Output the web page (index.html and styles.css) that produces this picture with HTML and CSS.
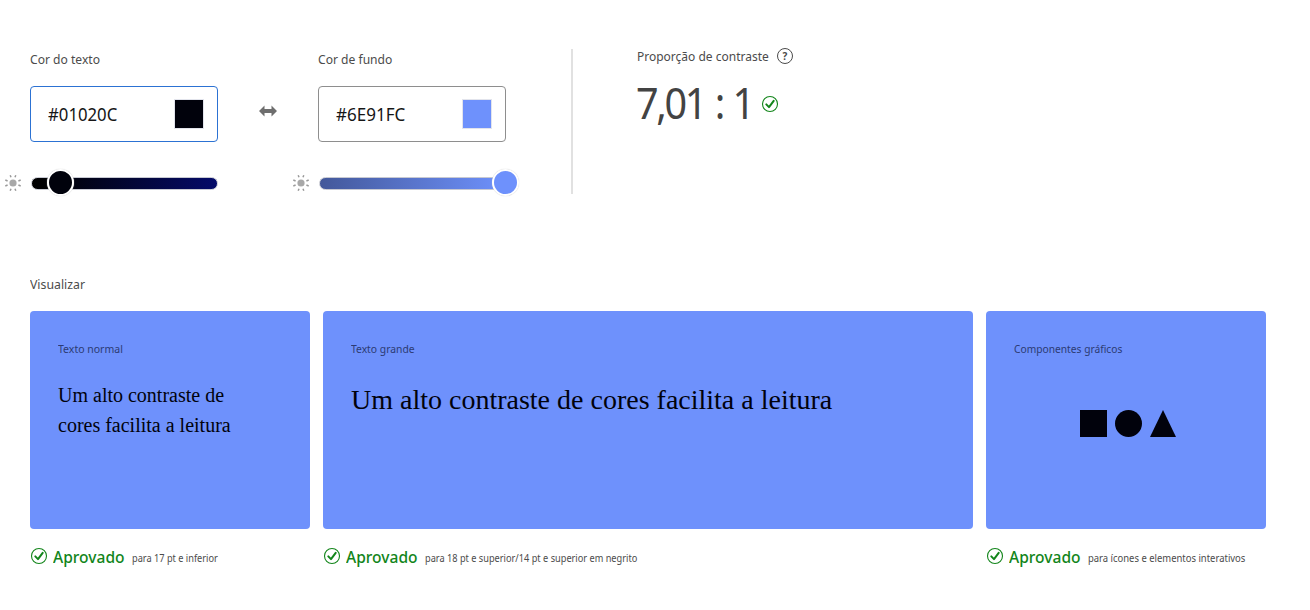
FILE: index.html
```html
<!DOCTYPE html>
<html lang="pt-BR">
<head>
<meta charset="utf-8">
<title>Contraste</title>
<link rel="stylesheet" href="styles.css">
</head>
<body>
<svg class="defs" width="0" height="0">
  <symbol id="sun" viewBox="0 0 18 18">
    <circle cx="9" cy="9" r="3.6" fill="#a8a8a8"/>
    <path d="M7 3.300 6.200 1.200M11 3.300l.8-2.100M7 14.700l-.8 2.100M11 14.700l.8 2.100M3.600 7 1.300 6M3.600 11l-2.300 1M14.400 7l2.300-1M14.400 11l2.300 1" stroke="#9a9a9a" stroke-width="1.500" fill="none"/>
  </symbol>
  <symbol id="check" viewBox="0 0 18 18">
    <circle cx="9" cy="9" r="7.500" fill="none" stroke="#12851a" stroke-width="1.100"/>
    <path d="M5.300 9.400 8 12.100 12.700 5.900" fill="none" stroke="#12851a" stroke-width="2" stroke-linecap="round" stroke-linejoin="round"/>
  </symbol>
</svg>
<main class="page">
  <section class="controls">
    <div class="field">
      <span class="label label-text">Cor do texto</span>
      <div class="input active"><span class="hex hex-text">#01020C</span><span class="swatch dark"></span></div>
      <div class="slider"><svg class="sun"><use href="#sun"/></svg><div class="track track-dark"><span class="thumb dark thumb-low"></span></div></div>
    </div>
    <svg class="swap" viewBox="0 0 18 12"><path d="M0 6 5.500.6V4h7V.6L18 6l-5.500 5.400V8h-7v3.400z" fill="#6e6e6e"/></svg>
    <div class="field">
      <span class="label label-bg">Cor de fundo</span>
      <div class="input"><span class="hex hex-bg">#6E91FC</span><span class="swatch blue"></span></div>
      <div class="slider"><svg class="sun"><use href="#sun"/></svg><div class="track track-blue"><span class="thumb blue thumb-high"></span></div></div>
    </div>
    <div class="divider"></div>
    <div class="ratio">
      <div class="ratio-head"><span class="label label-ratio">Proporção de contraste</span><span class="help">?</span></div>
      <div class="ratio-row"><span class="value">7,01 : 1</span><svg class="check"><use href="#check"/></svg></div>
    </div>
  </section>
  <h2 class="label label-preview">Visualizar</h2>
  <section class="cards">
    <article class="card"><div class="panel"><span class="kind kind-normal">Texto normal</span><p class="sample">Um alto contraste de<br>cores facilita a leitura</p></div>
      <div class="status"><svg class="check"><use href="#check"/></svg><strong>Aprovado</strong><small class="note-normal">para 17 pt e inferior</small></div></article>
    <article class="card"><div class="panel"><span class="kind kind-large">Texto grande</span><p class="sample large">Um alto contraste de cores facilita a leitura</p></div>
      <div class="status"><svg class="check"><use href="#check"/></svg><strong>Aprovado</strong><small class="note-large">para 18 pt e superior/14 pt e superior em negrito</small></div></article>
    <article class="card"><div class="panel"><span class="kind kind-graphic">Componentes gráficos</span>
      <svg class="shapes" viewBox="0 0 96 27"><path d="M0 0h27v27H0z"/><circle cx="48.500" cy="13.500" r="13.500"/><path d="m83 0 13 27H70z"/></svg></div>
      <div class="status"><svg class="check"><use href="#check"/></svg><strong>Aprovado</strong><small class="note-graphic">para ícones e elementos interativos</small></div></article>
  </section>
</main>
</body>
</html>
```
FILE: styles.css
```css
* { box-sizing: border-box; }
body { margin: 0; background: #fff; font-family: "Noto Sans", sans-serif; color: #4b4b4b; }
.defs { position: absolute; }
.page { width: 1310px; height: 610px; padding: 49px 44px 0 30px; overflow: hidden; }
.controls { display: flex; height: 145px; }
.field { width: 188px; display: flex; flex-direction: column; }
.field > * { flex-shrink: 0; }

/* Slightly condensed interface lettering */
.label, .hex, .value, .kind, .status strong, .status small { transform: scaleX(.93); transform-origin: left center; white-space: nowrap; }

.label { display: block; margin: 0; font-size: 13px; line-height: 20px; font-weight: 400; }
.input { display: flex; align-items: center; justify-content: space-between; height: 56px; margin-top: 17px; padding: 0 13px 0 17px; border: 1px solid #8e8e8e; border-radius: 4px; }
.input.active { border-color: #2c72d3; }
.hex { font-size: 18px; color: #161616; }
.hex-bg { transform: scaleX(.945); }
.swatch { width: 30px; height: 30px; border: 1px solid #e2e4ec; }
.dark { background: #01020c; }
.blue { background: #6e91fc; }
.slider { display: flex; align-items: center; height: 26px; margin: 28px 0 0 -26px; gap: 9px; }
.sun { width: 18px; height: 18px; flex: none; }
.track { position: relative; width: 187px; height: 13px; border: 1px solid #c7c9d2; border-radius: 7px; flex: none; }
.track-dark { background: linear-gradient(90deg, #000, #01020c 18%, #050b6a); }
.track-blue { background: linear-gradient(90deg, #43589a, #6e91fc); }
.thumb { position: absolute; top: -9px; width: 27px; height: 27px; border: 2px solid #fff; border-radius: 50%; box-shadow: 0 0 1px #c4c4c4; }
.thumb-low { left: 15px; }
.thumb-high { left: 172px; }
.swap { width: 18px; height: 12px; margin: 56px 41px 0; }
.divider { width: 2px; margin: 0 64px 0 65px; background: #e1e1e1; }
.ratio-head { display: flex; align-items: center; gap: 8px; height: 16px; margin-top: -1px; }
.label-ratio { width: 132px; transform: scaleX(.923); }
.help { width: 16px; height: 16px; border: 1px solid #4b4b4b; border-radius: 50%; font-size: 10px; line-height: 14px; font-weight: 700; text-align: center; }
.ratio-row { display: flex; align-items: center; height: 60px; margin-top: 10px; gap: 10px; }
.value { width: 114px; font-size: 43px; line-height: 60px; color: #434343; letter-spacing: -2.600px; word-spacing: 2px; transform: translate(-1px, -1px) scaleX(.92); }
.check { width: 18px; height: 18px; flex: none; }
.label-preview { margin-top: 80px; transform: scaleX(.945); }
.cards { display: grid; grid-template-columns: 280px 650px 280px; gap: 13px; margin-top: 17px; }
.panel { display: flex; flex-direction: column; height: 218px; padding: 29px 28px; border-radius: 4px; background: #6e91fc; }
.kind { font-size: 11px; line-height: 18px; color: #2c3b73; }
.kind-normal { transform: scaleX(.955); }
.kind-large { transform: scaleX(.94); }
.sample { margin: 22px 0 0; font-family: "Liberation Serif", serif; font-size: 20px; line-height: 30px; color: #01020c; white-space: nowrap; }
.sample.large { font-size: 28px; line-height: 40px; }
.shapes { width: 96px; height: 27px; margin: 52px 0 0 66px; fill: #01020c; }
.status { display: flex; align-items: center; height: 26px; margin-top: 14px; }
.status strong { width: 71px; margin: 2px 0 0 5px; font-size: 17px; line-height: 26px; font-weight: 500; color: #12851a; transform: scaleX(.915); }
.status small { margin: 3px 0 0 8px; font-size: 10px; transform: scaleX(.92); }
.status .note-graphic { transform: scaleX(.945); }
```
